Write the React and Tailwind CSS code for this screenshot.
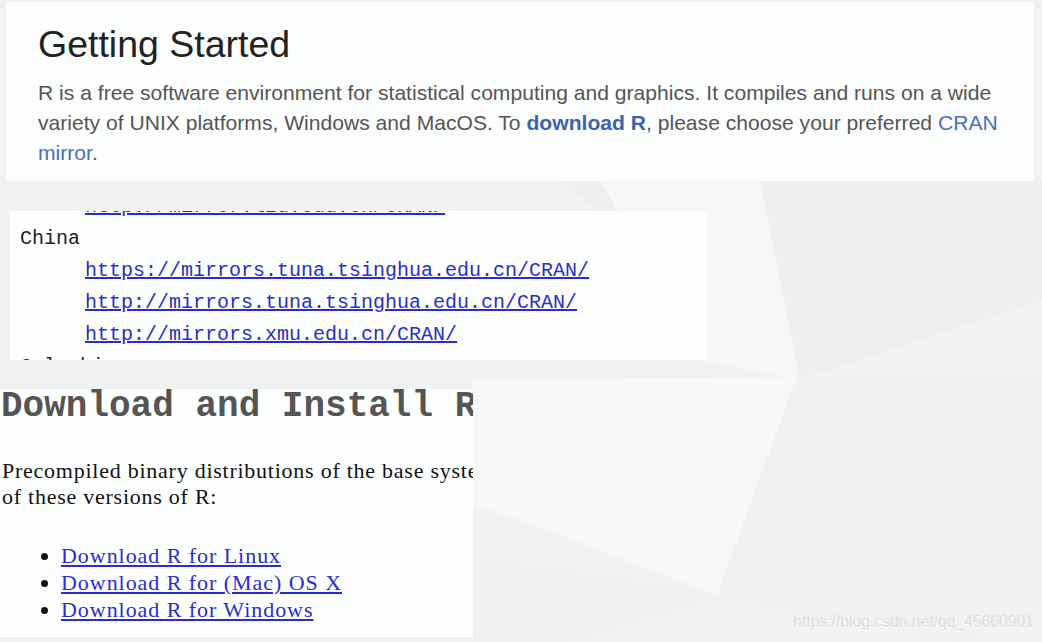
import React from "react";

const mirrors = [
  "http://mirror.lzu.edu.cn/CRAN/",
];

const china = [
  "https://mirrors.tuna.tsinghua.edu.cn/CRAN/",
  "http://mirrors.tuna.tsinghua.edu.cn/CRAN/",
  "http://mirrors.xmu.edu.cn/CRAN/",
];

const downloads = ["Download R for Linux", "Download R for (Mac) OS X", "Download R for Windows"];

const Backdrop = () => (
  <svg className="absolute inset-0" width="1042" height="642" viewBox="0 0 1042 642">
    <rect width="1042" height="642" fill="#f1f2f2" />
    <polygon points="560,180 1042,180 1042,300 800,380" fill="#eef0f0" />
    <polygon points="600,180 760,180 800,380 700,360" fill="#f6f7f7" />
    <polygon points="473,380 797,377 717,595 520,520 473,505" fill="#f7f8f8" />
    <polygon points="797,377 1042,380 1042,600 960,642 717,595" fill="#f0f1f1" />
    <polygon points="473,560 717,595 560,642 473,642" fill="#eff0f0" />
  </svg>
);

const App = () => {
  return (
    <div className="relative w-[1042px] h-[642px] overflow-hidden">
      <Backdrop />

      <div className="relative flex flex-col">
        {/* getting started card */}
        <div className="ml-[6px] mt-[2px] w-[1028px] h-[179px] bg-[#fcfdfd] px-[32px] pt-[20px] font-['Liberation_Sans',Arial,sans-serif]">
          <h1 className="text-[37.5px] leading-[44px] text-[#222]">Getting Started</h1>
          <p className="mt-[12px] text-[21.1px] leading-[30px] text-[#555] whitespace-nowrap">
            R is a free software environment for statistical computing and graphics. It compiles and runs on a wide
            <br />
            variety of UNIX platforms, Windows and MacOS. To{" "}
            <a className="font-bold text-[#3a64b0]">download R</a>, please choose your preferred{" "}
            <a className="text-[#4a6fb8]">CRAN</a>
            <br />
            <a className="text-[#4a6fb8]">mirror</a>.
          </p>
        </div>

        {/* mirror list */}
        <div className="ml-[10px] mt-[30px] w-[697px] h-[149px] overflow-hidden bg-[#fdfefe] font-['Liberation_Mono','Courier_New',monospace] text-[20px] leading-[32px]">
          <div className="mt-[-20px]">
            {mirrors.map((m) => (
              <div key={m} className="pl-[75px]">
                <a className="text-[#2b2bd0] underline">{m}</a>
              </div>
            ))}
            <div className="pl-[10px] text-[#222]">China</div>
            {china.map((m) => (
              <div key={m} className="pl-[75px]">
                <a className="text-[#2b2bd0] underline">{m}</a>
              </div>
            ))}
            <div className="pl-[10px] text-[#222]">Colombia</div>
          </div>
        </div>

        {/* download and install */}
        <div className="mt-[29px] w-[473px] h-[248px] overflow-hidden bg-[#fdfefe]">
          <h2 className="whitespace-nowrap pl-[1px] font-['Liberation_Mono','Courier_New',monospace] text-[36px] leading-[36px] font-bold text-[#555]">
            Download and Install R
          </h2>
          <div className="mt-[33px] font-['Liberation_Serif','Times_New_Roman',serif] text-[22px] leading-[26px] tracking-[0.75px] text-[#111]">
            <p className="whitespace-nowrap pl-[2px]">
              Precompiled binary distributions of the base system and contributed packages,
            </p>
            <p className="pl-[2px]">of these versions of R:</p>
          </div>
          <ul className="mt-[32px] list-disc pl-[61px] font-['Liberation_Serif','Times_New_Roman',serif] text-[22px] leading-[27px] tracking-[0.95px] text-[#111]">
            {downloads.map((d) => (
              <li key={d}>
                <a className="text-[#2b2bd0] underline">{d}</a>
              </li>
            ))}
          </ul>
        </div>
      </div>

      {/* watermark */}
      <div className="absolute right-[8px] bottom-[8px] font-['Liberation_Sans',Arial,sans-serif] text-[15.7px] text-[#dcdddd] [text-shadow:0_1px_0_#ffffff]">
        https://blog.csdn.net/qq_45660901
      </div>
    </div>
  );
};

export default App;
